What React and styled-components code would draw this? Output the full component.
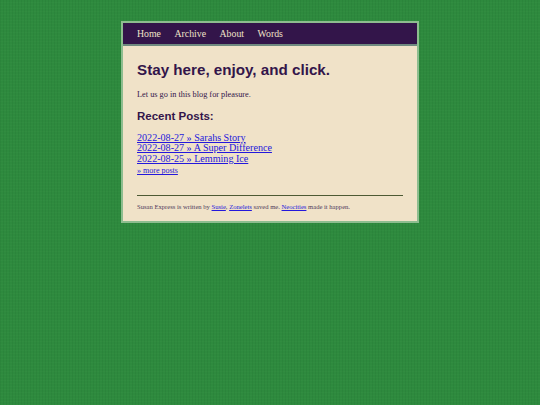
import React from "react";
import styled, { createGlobalStyle } from "styled-components";

const GlobalStyle = createGlobalStyle`
  html, body {
    margin: 0;
    padding: 0;
  }
  body {
    min-height: 405px;
    background-color: #2e8a3e;
    background-image: repeating-linear-gradient(90deg, rgba(0, 60, 20, 0.07) 0 1px, transparent 1px 3px),
      repeating-linear-gradient(0deg, rgba(120, 200, 120, 0.04) 0 1px, transparent 1px 3px);
    font-family: "Liberation Serif", serif;
    overflow: hidden;
  }
`;

const Page = styled.div`
  width: 298px;
  margin: 0 auto;
  padding-top: 21px;
`;

const Card = styled.div`
  box-sizing: border-box;
  height: 202px;
  background: #f0e2c8;
  border: 2px solid #8dbd8f;
  display: flex;
  flex-direction: column;
`;

const Nav = styled.nav`
  height: 21px;
  flex: none;
  background: #33154a;
  border-bottom: 2px solid #6f8a80;
  display: flex;
  align-items: center;
  gap: 13.5px;
  padding-left: 14px;
`;

const NavLink = styled.a`
  color: #f0e2c8;
  font-size: 9.8px;
  line-height: 21px;
  text-decoration: none;
`;

const Main = styled.main`
  padding: 14px 14px 0;
  color: #33154a;
`;

const Title = styled.h1`
  margin: 0;
  font-family: "Liberation Sans", sans-serif;
  font-size: 15.2px;
  line-height: 20px;
  font-weight: 700;
`;

const Intro = styled.p`
  margin: 9px 0 0;
  font-size: 8.3px;
  line-height: 12px;
`;

const SubTitle = styled.h2`
  margin: 8px 0 0;
  font-family: "Liberation Sans", sans-serif;
  font-size: 11.5px;
  line-height: 15px;
  font-weight: 700;
`;

const PostList = styled.div`
  margin-top: 9px;
  display: flex;
  flex-direction: column;
`;

const PostLink = styled.a`
  color: #2418dc;
  font-size: 10.1px;
  line-height: 10.4px;
  text-decoration: underline;
`;

const MoreLink = styled.a`
  margin-top: 1px;
  color: #2418dc;
  font-size: 8px;
  line-height: 12px;
  text-decoration: underline;
`;

const Rule = styled.hr`
  margin: 18px 0 0;
  border: 0;
  height: 1px;
  background: #4d5a34;
`;

const Footer = styled.footer`
  margin-top: 6px;
  font-size: 6.6px;
  line-height: 9px;
  color: #4d3a5c;
`;

const FootLink = styled.a`
  color: #2418dc;
  text-decoration: underline;
`;

const posts = ["2022-08-27 » Sarahs Story", "2022-08-27 » A Super Difference", "2022-08-25 » Lemming Ice"];

export default function App() {
  return (
    <>
      <GlobalStyle />
      <Page>
        <Card>
          <Nav>
            {["Home", "Archive", "About", "Words"].map((item) => (
              <NavLink key={item} href="#">
                {item}
              </NavLink>
            ))}
          </Nav>
          <Main>
            <Title>Stay here, enjoy, and click.</Title>
            <Intro>Let us go in this blog for pleasure.</Intro>
            <SubTitle>Recent Posts:</SubTitle>
            <PostList>
              {posts.map((post) => (
                <PostLink key={post} href="#">
                  {post}
                </PostLink>
              ))}
              <MoreLink href="#">» more posts</MoreLink>
            </PostList>
            <Rule />
            <Footer>
              Susan Express is written by <FootLink href="#">Susie</FootLink>, <FootLink href="#">Zonelets</FootLink> saved me.{" "}
              <FootLink href="#">Neocities</FootLink> made it happen.
            </Footer>
          </Main>
        </Card>
      </Page>
    </>
  );
}
